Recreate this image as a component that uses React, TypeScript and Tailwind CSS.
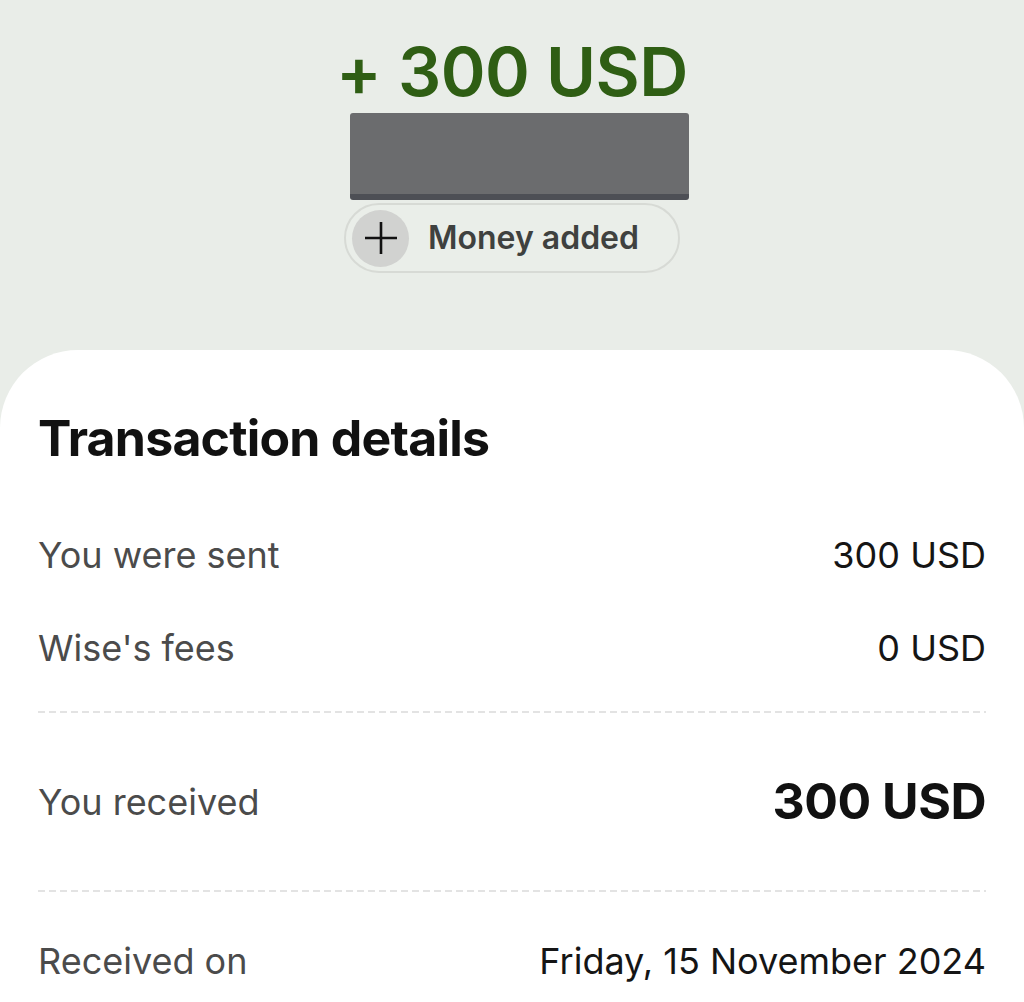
const rows = [
  { label: "You were sent", value: "300 USD" },
  { label: "Wise's fees", value: "0 USD" },
];

const Dashed = () => (
  <div className="mx-[38px] h-[2px] bg-[repeating-linear-gradient(to_right,#e3e3e3_0_7px,transparent_7px_11px)]" />
);

export default function App() {
  return (
    <div
      className="h-[1002px] w-[1024px] overflow-hidden bg-[#e9ede8]"
      style={{ fontFamily: "Inter, 'Noto Sans', sans-serif" }}
    >
      <div className="flex flex-col items-center pt-[36px]">
        <h1 className="text-[68px] font-semibold leading-[70px] tracking-[-0.5px] text-[#2f5e14]">
          + 300 USD
        </h1>
        <div className="mt-[7px] h-[87px] w-[339px] translate-x-[7px] rounded-[3px] border-b-[6px] border-[#4d4f55] bg-[#6b6c6e]" />
        <div className="mt-[3px] flex h-[70px] w-[336px] items-center rounded-full border-2 border-[#d7dad5] bg-[#eaeee9] pl-[6px]">
          <div className="flex h-[57px] w-[57px] items-center justify-center rounded-full bg-[#d1d2d0]">
            <svg width="34" height="34" viewBox="0 0 34 34">
              <path d="M17 1v32M1 17h32" stroke="#111" strokeWidth="2.6" />
            </svg>
          </div>
          <span className="ml-[19px] text-[32px] font-semibold text-[#3f413f]">
            Money added
          </span>
        </div>
      </div>

      <div className="mt-[77px] rounded-t-[78px] bg-white pb-10">
        <h2 className="px-[38px] pt-[58px] text-[50px] font-bold leading-[60px] tracking-[-0.8px] text-[#111]">
          Transaction details
        </h2>
        <div className="mt-[40px]">
          {rows.map((r) => (
            <div
              key={r.label}
              className="flex h-[93px] items-center justify-between px-[38px] text-[36px]"
            >
              <span className="text-[#4b4b4b]">{r.label}</span>
              <span className="text-[#151515]">{r.value}</span>
            </div>
          ))}
        </div>
        <div className="mt-[17px]">
          <Dashed />
        </div>
        <div className="flex h-[177px] items-center justify-between px-[38px]">
          <span className="text-[36px] text-[#4b4b4b]">You received</span>
          <span className="text-[50px] font-bold tracking-[-0.5px] text-[#111]">
            300 USD
          </span>
        </div>
        <Dashed />
        <div className="flex h-[138px] items-center justify-between px-[38px] text-[36px]">
          <span className="text-[#4b4b4b]">Received on</span>
          <span className="text-[#151515]">Friday, 15 November 2024</span>
        </div>
      </div>
    </div>
  );
}
